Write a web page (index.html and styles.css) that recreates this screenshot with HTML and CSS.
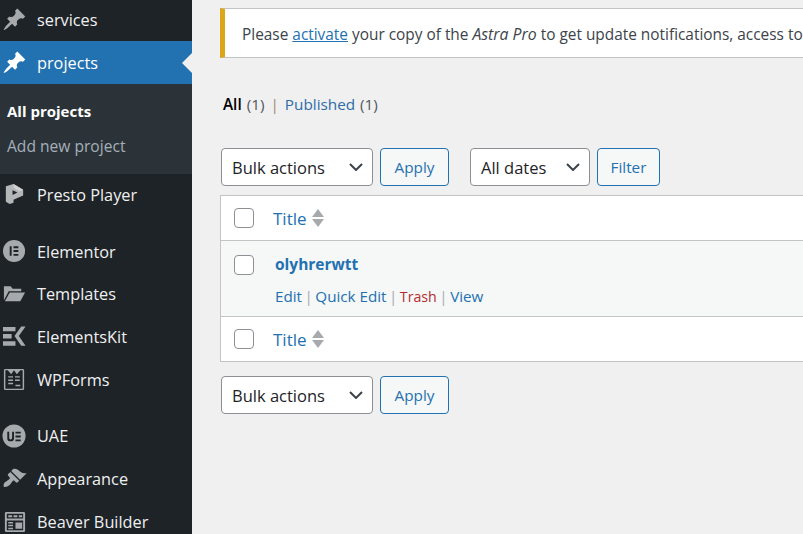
FILE: index.html
```html
<!DOCTYPE html>
<html lang="en">
<head>
<meta charset="utf-8">
<title>projects</title>
<link rel="stylesheet" href="styles.css">
</head>
<body>
<div class="app">
  <nav class="sidebar">
    <a class="item item-first"><svg class="ico" viewBox="0 0 20 20"><path d="M10.440 3.020l1.820-1.820 6.360 6.350-1.830 1.820c-1.050-.68-2.480-.57-3.410.36l-.75.75c-.92.93-1.040 2.350-.35 3.410l-1.830 1.820-2.410-2.410-2.800 2.790c-.42.42-3.380 2.710-3.800 2.290s1.860-3.390 2.280-3.810l2.790-2.790L4.100 9.360l1.830-1.820c1.050.69 2.480.57 3.400-.36l.75-.75c.93-.92 1.050-2.350.36-3.410z"/></svg><span>services</span></a>
    <a class="item item-active"><svg class="ico" viewBox="0 0 20 20"><path d="M10.440 3.020l1.820-1.820 6.360 6.350-1.830 1.820c-1.050-.68-2.480-.57-3.410.36l-.75.75c-.92.93-1.040 2.350-.35 3.410l-1.830 1.820-2.410-2.410-2.800 2.790c-.42.42-3.380 2.710-3.800 2.290s1.860-3.390 2.280-3.810l2.790-2.790L4.100 9.360l1.830-1.820c1.050.69 2.480.57 3.400-.36l.75-.75c.93-.92 1.050-2.350.36-3.410z"/></svg><span>projects</span></a>
    <div class="submenu">
      <a class="sub sub-current">All projects</a>
      <a class="sub">Add new project</a>
    </div>
    <a class="item"><svg class="ico ico-presto" viewBox="0 0 26 26"><path d="M4 4.500l8-2.500 10 6v6l-10 4.500v3l-4 1.500-4-2.500z"/><path class="facet" d="M12 2l10 6-4 1.500-6-3.500z"/><path class="cut" d="M11 8.500l5 2.500-5 2.500z"/></svg><span>Presto Player</span></a>
    <div class="sep"></div>
    <a class="item"><svg class="ico" viewBox="0 0 26 26"><circle cx="12.500" cy="12.500" r="11.500"/><path class="cut" d="M8 7.500h2v10h-2zM12 7.500h5v2h-5zM12 11.500h5v2h-5zM12 15.500h5v2h-5z"/></svg><span>Elementor</span></a>
    <a class="item"><svg class="ico" viewBox="0 0 26 26"><path d="M2 4.500h7l2 2.500h9v2.500h-13l-5 9.500z"/><path d="M8 11h16l-5 9h-16z"/></svg><span>Templates</span></a>
    <a class="item"><svg class="ico" viewBox="0 0 26 26"><path d="M1 3h13v4.500h-13zM1 10.500h9v4.500h-9zM1 18h13v4.500h-13zM20 2.500h4.500l-7 10 7 10h-4.500l-7-10z"/></svg><span>ElementsKit</span></a>
    <a class="item"><svg class="ico" viewBox="0 0 26 26"><path fill-rule="evenodd" d="M3.500 2h18q1.500 0 1.500 1.500v19q0 1.500-1.500 1.500h-18q-1.500 0-1.500-1.500v-19q0-1.500 1.500-1.500zM3.500 3.500v19h18v-19h-2.500l-3.500 4-3-4-3 4-3.500-4z"/><path d="M6.500 9.500h5v1.500h-5zM13.500 9.500h5v1.500h-5zM6.500 13h5v1.500h-5zM13.500 13h5v1.500h-5zM6.500 16.500h5v1.500h-5zM14 18.500h5v1.500h-5z"/></svg><span>WPForms</span></a>
    <div class="sep"></div>
    <a class="item"><svg class="ico" viewBox="0 0 26 26"><circle cx="12.500" cy="12.500" r="12"/><path class="cut" d="M5.500 8h2v6.500q0 1.500 1.500 1.500t1.500-1.500v-6.500h2v7q0 3-3.500 3t-3.500-3zM14 8h5.500v2h-5.500zM14 12h5.500v2h-5.500zM14 16h5.500v2h-5.500z"/></svg><span>UAE</span></a>
    <a class="item"><svg class="ico" viewBox="0 0 20 20"><path d="M14.480 11.060L7.410 3.990l1.500-1.500c.5-.56 2.300-.47 3.510.32 1.210.8 1.430 1.280 2.910 2.100 1.180.64 2.450 1.260 4.450.85zm-.71.71L6.700 4.700 4.930 6.470c-.39.39-.39 1.020 0 1.410l1.060 1.060c.39.39.39 1.030 0 1.420-.6.6-1.430 1.110-2.210 1.690-.35.26-.7.53-1.010.84C1.430 13.230.99 15.990 1.500 16.500c.5.51 3.260.07 4.610-1.290.31-.31.58-.66.84-1.010.58-.78 1.090-1.610 1.690-2.210.39-.39 1.020-.39 1.410 0l1.060 1.060c.39.39 1.020.39 1.410 0z"/></svg><span>Appearance</span></a>
    <a class="item"><svg class="ico" viewBox="0 0 26 26"><path fill-rule="evenodd" d="M4.500 3h18q1.500 0 1.500 1.500v18q0 1.500-1.500 1.500h-18q-1.500 0-1.500-1.500v-18q0-1.500 1.500-1.500zM5 5v5h17v-5zM5 12v10h17v-10z"/><path d="M6.500 6.500h4v2h-4zM12 6.500h4v2h-4zM17.500 6.500h3.500v2h-3.500zM6.500 13.500h5v1.500h-5zM6.500 16.500h5v1.500h-5zM6.500 19.500h5v1.500h-5zM14 14h7v6.500h-7z"/></svg><span>Beaver Builder</span></a>
  </nav>
  <main class="main">
    <div class="notice">Please <a class="notice-link">activate</a> your copy of the <em>Astra Pro</em> to get update notifications, access to support features &amp; other resources!</div>
    <ul class="views">
      <li><b>All</b> <span class="count">(1)</span><span class="pipe">|</span></li>
      <li><a class="link">Published</a> <span class="count">(1)</span></li>
    </ul>
    <div class="tablenav tablenav-top">
      <div class="select select-bulk">Bulk actions<svg class="chev" viewBox="0 0 14 8"><path d="M1 1l6 6 6-6"/></svg></div>
      <button class="btn btn-apply">Apply</button>
      <div class="select select-dates">All dates<svg class="chev" viewBox="0 0 14 8"><path d="M1 1l6 6 6-6"/></svg></div>
      <button class="btn btn-filter">Filter</button>
    </div>
    <div class="table">
      <div class="row row-head">
        <span class="check"></span>
        <a class="link title-link">Title</a>
        <span class="sort"><i class="up"></i><i class="down"></i></span>
      </div>
      <div class="row row-body">
        <span class="check check-body"></span>
        <div class="cell">
          <a class="post-title">olyhrerwtt</a>
          <div class="actions"><a class="link">Edit</a><span class="bar">|</span><a class="link">Quick Edit</a><span class="bar">|</span><a class="trash">Trash</a><span class="bar">|</span><a class="link">View</a></div>
        </div>
      </div>
      <div class="row row-foot">
        <span class="check"></span>
        <a class="link title-link">Title</a>
        <span class="sort"><i class="up"></i><i class="down"></i></span>
      </div>
    </div>
    <div class="tablenav tablenav-bottom">
      <div class="select select-bulk">Bulk actions<svg class="chev" viewBox="0 0 14 8"><path d="M1 1l6 6 6-6"/></svg></div>
      <button class="btn btn-apply">Apply</button>
    </div>
  </main>
</div>
</body>
</html>
```
FILE: styles.css
```css
* { box-sizing: border-box; }
html, body { margin: 0; height: 100%; overflow: hidden; }
body { background: #f0f0f1; font-family: "Open Sans", "Noto Sans", sans-serif; font-size: 15.3px; color: #3c434a; }
.app { display: flex; width: 803px; height: 534px; overflow: hidden; }

.sidebar { flex: none; width: 192px; height: 534px; overflow: hidden; background: #1d2327; color: #f0f0f1; }
.item { display: flex; align-items: center; height: 42.67px; padding-left: 2px; font-size: 16.3px; color: #f0f0f1; position: relative; }
.item span { margin-left: 10px; }
.item-first { height: 41px; }
.item-first span { position: relative; top: -1px; }
.item-first .ico { position: relative; top: -1px; }
.ico { flex: none; width: 25px; height: 25px; fill: #a7aaad; }
.ico .cut { fill: #1d2327; }
.ico-presto { fill: #b4b6b8; }
.ico .facet { fill: #d0d1d2; }
.item-active { height: 43px; background: #2271b1; color: #fff; }
.item-active .ico { fill: #fff; }
.item-active::after { content: ""; position: absolute; right: 0; top: 50%; margin-top: -10px; border: 10px solid transparent; border-right-color: #f0f0f1; border-left-width: 0; }
.submenu { display: flex; flex-direction: column; height: 89.6px; padding-top: 10px; background: #2c3338; }
.sub { height: 34px; line-height: 34px; padding-left: 7px; font-size: 15.6px; color: #a4b0ba; }
.sub-current { height: 35px; color: #fff; font-weight: 700; font-size: 15px; }
.sep { height: 14px; }

.main { flex: none; width: 611px; padding: 8px 0 0 28px; overflow: hidden; }
.notice { width: 760px; height: 50px; padding-left: 17px; font-size: 15.4px; line-height: 50px; white-space: nowrap; background: #fff; border-left: 5px solid #dba617; border-bottom: 1px solid #c3c4c7; border-top: 1px solid #c3c4c7; color: #3c434a; }
.notice em { font-size: 15.8px; }
.notice-link { color: #2271b1; text-decoration: underline; }
.views { display: flex; list-style: none; margin: 34px 0 0; padding: 0 0 0 3px; height: 24px; line-height: 24px; color: #50575e; }
.views b { color: #000; font-weight: 600; }
.count { color: #50575e; margin-left: 1px; }
.pipe { margin: 0 6px; color: #a08a70; }
.link { color: #2271b1; }
.views .link { color: #2d6ca8; }
.tablenav { display: flex; align-items: center; height: 38px; }
.tablenav-top { margin-top: 32px; margin-left: 1px; }
.tablenav-bottom { margin-top: 14px; margin-left: 1px; }
.select { display: flex; align-items: center; justify-content: space-between; height: 38px; padding: 0 9px 0 10px; font-size: 16.5px; color: #1d2327; background: #fff; border: 1px solid #8c8f94; border-radius: 4px; }
.select-bulk { width: 152px; }
.select-dates { width: 120px; margin-left: 21px; }
.chev { width: 14px; height: 8px; fill: none; stroke: #3c434a; stroke-width: 2; }
.btn { height: 38px; margin-left: 7px; padding: 0; font-family: inherit; font-size: 15.3px; color: #2271b1; background: #f6f7f7; border: 1px solid #2271b1; border-radius: 4px; }
.btn-apply { width: 69px; }
.btn-filter { width: 63px; }
.table { width: 760px; margin-top: 9px; background: #fff; border: 1px solid #c3c4c7; border-right: 0; }
.row { display: flex; align-items: center; padding-left: 13px; }
.row-head { height: 45px; border-bottom: 1px solid #c3c4c7; }
.row-body { height: 75px; align-items: flex-start; background: #f6f7f7; padding-top: 14px; }
.row-foot { height: 45px; border-top: 1px solid #c3c4c7; }
.check { flex: none; width: 20px; height: 20px; background: #fff; border: 1px solid #8c8f94; border-radius: 4px; }
.title-link { margin-left: 19px; font-size: 17px; }
.sort { display: flex; flex-direction: column; gap: 2px; margin-left: 5px; }
.up, .down { display: block; width: 0; border: 6px solid transparent; border-top-width: 0; border-bottom-width: 8px; }
.up { border-bottom-color: #a7aaad; }
.down { border-bottom: 0; border-top: 8px solid #a7aaad; }
.cell { margin-left: 21px; margin-top: -3px; }
.post-title { display: block; height: 24px; line-height: 24px; font-weight: 700; font-size: 15.5px; color: #2271b1; }
.actions { display: flex; align-items: baseline; margin-top: 9px; font-size: 15.2px; line-height: 22px; }
.bar { margin: 0 2.500px; color: #a7aaad; }
.trash { color: #b32d2e; font-size: 14.2px; }
```
